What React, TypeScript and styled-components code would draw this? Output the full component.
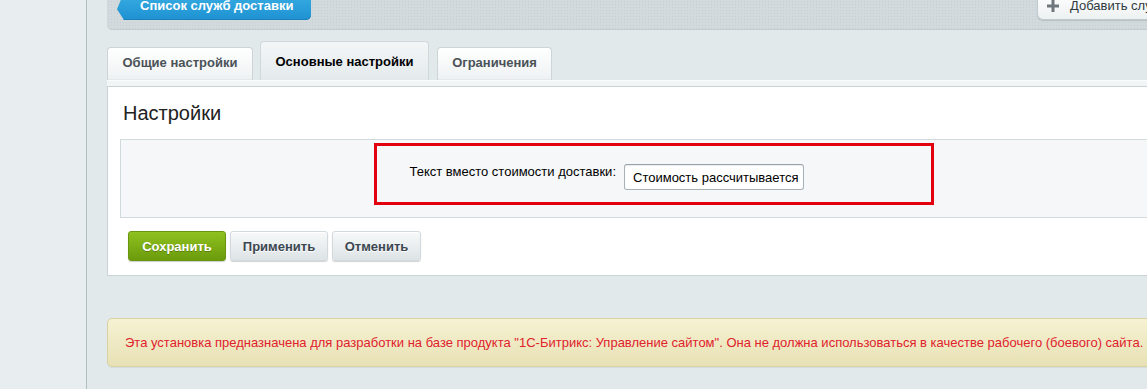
import React from 'react'
import styled, { createGlobalStyle } from 'styled-components'

const GlobalStyle = createGlobalStyle`
  html, body {
    margin: 0;
    padding: 0;
    background: #e2e9eb;
    font-family: "Liberation Sans", Arial, sans-serif;
    font-size: 13px;
    color: #000;
  }
  * {
    box-sizing: border-box;
  }
`

const tabs = [
  { id: 'common', title: 'Общие настройки', width: 146 },
  { id: 'main', title: 'Основные настройки', width: 169 },
  { id: 'limits', title: 'Ограничения', width: 115 },
]

export default function App() {
  const activeTab = 'main'
  return (
    <>
      <GlobalStyle />
      <Page>
        <Sidebar />
        <Main>
          <Inner>
            <TopBar>
              <BackButton>Список служб доставки</BackButton>
              <AddButton>
                <PlusIcon />
                <span>Добавить службу доставки</span>
              </AddButton>
            </TopBar>

            <Tabs>
              {tabs.map((tab) => (
                <Tab key={tab.id} $active={tab.id === activeTab} $width={tab.width}>
                  {tab.title}
                </Tab>
              ))}
            </Tabs>

            <PanelFrame>
              <Panel>
                <Heading>Настройки</Heading>
                <SettingsBox>
                  <Highlight>
                    <FieldRow>
                      <FieldLabel>Текст вместо стоимости доставки:</FieldLabel>
                      <TextInput defaultValue="Стоимость рассчитывается" />
                    </FieldRow>
                  </Highlight>
                </SettingsBox>
                <Buttons>
                  <Button $primary $width={98}>Сохранить</Button>
                  <Button $width={98}>Применить</Button>
                  <Button $width={89}>Отменить</Button>
                </Buttons>
              </Panel>
            </PanelFrame>

            <Warning>
              Эта установка предназначена для разработки на базе продукта "1С-Битрикс: Управление сайтом". Она не должна использоваться в качестве рабочего (боевого) сайта.
            </Warning>
          </Inner>
        </Main>
      </Page>
    </>
  )
}

function PlusIcon() {
  return (
    <svg width="12" height="12" viewBox="0 0 12 12">
      <rect x="4.5" y="0" width="3" height="12" fill="#6f777c" />
      <rect x="0" y="4.5" width="12" height="3" fill="#6f777c" />
    </svg>
  )
}

const Page = styled.div`
  display: flex;
  width: 1147px;
  height: 389px;
  overflow: hidden;
`
const Sidebar = styled.div`
  flex: 0 0 87px;
  background: #e8eef0;
  border-right: 1px solid #b3bec2;
`
const Main = styled.div`
  flex: 1;
  min-width: 0;
  overflow: hidden;
  padding-left: 20px;
`
const Inner = styled.div`
  margin-right: -20px;
`
const TopBar = styled.div`
  display: flex;
  align-items: flex-start;
  height: 30px;
  padding-left: 10px;
  background-color: #d3dade;
  background-image: radial-gradient(#c6cfd3 0.8px, transparent 1px);
  background-size: 3px 3px;
  border-bottom: 1px solid #c3ccd0;
  border-radius: 0 0 0 5px;
`
const BackButton = styled.div`
  margin-top: -8px;
  height: 28px;
  line-height: 27px;
  padding: 0 18px 0 23px;
  color: #fff;
  font-weight: bold;
  font-size: 13px;
  background: linear-gradient(#3aaee3, #1e92d2);
  border-radius: 0 0 5px 5px;
  clip-path: polygon(7px 0, 100% 0, 100% 100%, 7px 100%, 0 62%);
  box-shadow: inset 0 -1px 0 #1a7fb8;
`
const AddButton = styled.div`
  display: flex;
  align-items: center;
  gap: 11px;
  margin-left: auto;
  flex: 0 0 130px;
  overflow: hidden;
  margin-top: -8px;
  height: 28px;
  padding-left: 9px;
  white-space: nowrap;
  font-size: 13px;
  color: #2f3a40;
  background: linear-gradient(#ffffff, #eef1f2);
  border: 1px solid #c0c9cd;
  border-top: 0;
  border-right: 0;
  border-radius: 0 0 0 6px;
  box-shadow: 0 1px 1px rgba(0, 0, 0, 0.12);
  svg {
    flex-shrink: 0;
  }
`
const Tabs = styled.div`
  display: flex;
  align-items: flex-end;
  gap: 7px;
  margin-top: 11px;
  height: 39px;
`
const Tab = styled.div<{ $active?: boolean; $width: number }>`
  width: ${(p) => p.$width}px;
  flex-shrink: 0;
  text-align: center;
  white-space: nowrap;
  height: ${(p) => (p.$active ? '39px' : '33px')};
  padding-top: ${(p) => (p.$active ? '12px' : '7px')};
  line-height: 16px;
  font-size: 13px;
  font-weight: bold;
  color: ${(p) => (p.$active ? '#000' : '#4a5257')};
  background: ${(p) =>
    p.$active
      ? 'linear-gradient(#f3f6f7, #e4eaec)'
      : 'linear-gradient(#ffffff, #eef1f2)'};
  border: 1px solid ${(p) => (p.$active ? '#d0d8db' : '#cdd5d8')};
  border-bottom: 0;
  border-radius: 4px 4px 0 0;
  box-shadow: ${(p) => (p.$active ? 'none' : 'inset 0 -1px 0 #e3e8ea')};
  &:last-child {
    margin-left: 1px;
  }
`
const PanelFrame = styled.div`
  padding-top: 5px;
  background: #f2f5f6;
  border-top: 1px solid #fbfcfc;
`
const Panel = styled.div`
  background: #fff;
  border: 1px solid #c9d2d5;
  border-right: 0;
  padding: 0 13px 14px 12px;
`
const Heading = styled.h2`
  margin: 0;
  padding: 14px 0 14px 3px;
  font-size: 20px;
  line-height: 24px;
  font-weight: normal;
  color: #222;
`
const SettingsBox = styled.div`
  display: flex;
  padding: 3px 0 12px 253px;
  background: #f5f7f8;
  border: 1px solid #d3dadd;
`
const Highlight = styled.div`
  width: 560px;
  height: 62px;
  border: 3px solid #e3000f;
  padding-top: 18px;
`
const FieldRow = styled.div`
  display: flex;
  align-items: flex-start;
`
const FieldLabel = styled.div`
  width: 239px;
  text-align: right;
  line-height: 16px;
  font-size: 13px;
  color: #000;
`
const TextInput = styled.input`
  margin-left: 8px;
  width: 180px;
  height: 26px;
  padding: 0 0 0 8px;
  border: 1px solid #a7b2b8;
  border-top-color: #97a3aa;
  border-radius: 3px;
  background: #fff;
  box-shadow: inset 0 1px 1px rgba(0, 0, 0, 0.08);
  font-family: "Liberation Sans", Arial, sans-serif;
  font-size: 13px;
  color: #000;
  outline: none;
`
const Buttons = styled.div`
  display: flex;
  gap: 4px;
  margin-top: 13px;
  padding-left: 8px;
`
const Button = styled.button<{ $primary?: boolean; $width: number }>`
  width: ${(p) => p.$width}px;
  height: 30px;
  padding: 0;
  font-family: "Liberation Sans", Arial, sans-serif;
  font-size: 13px;
  font-weight: bold;
  cursor: pointer;
  border-radius: 3px;
  color: ${(p) => (p.$primary ? '#fff' : '#3b474f')};
  text-shadow: ${(p) => (p.$primary ? '0 1px rgba(0,0,0,0.25)' : '0 1px #fff')};
  background: ${(p) =>
    p.$primary
      ? 'linear-gradient(#8fc11f, #6b9b0c)'
      : 'linear-gradient(#f7f9f9, #dde3e6)'};
  border: 1px solid ${(p) => (p.$primary ? '#6a960f' : '#d3dadd')};
  box-shadow: ${(p) =>
    p.$primary
      ? '0 1px 1px rgba(0,0,0,0.2)'
      : '0 1px 1px rgba(0,0,0,0.18), inset 0 1px 0 #fff'};
`
const Warning = styled.div`
  margin-top: 42px;
  height: 49px;
  padding: 0 0 0 17px;
  display: flex;
  align-items: center;
  white-space: nowrap;
  font-size: 13px;
  color: #e0222b;
  background: linear-gradient(#f6f2d2, #e8e1b6);
  border: 1px solid #d8d1a2;
  border-radius: 5px;
  box-shadow: 0 1px 0 rgba(0, 0, 0, 0.05);
`
